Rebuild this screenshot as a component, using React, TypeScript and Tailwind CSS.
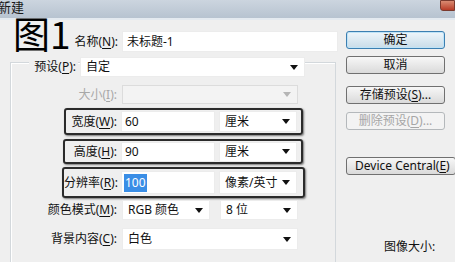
import React from 'react'

// Photoshop "新建" dialog with annotated fields
const FONT = "font-['Noto_Sans','Noto_Sans_CJK_SC',sans-serif]"

function Arrow({disabled}: {disabled?: boolean}) {
  return (
    <svg width="8" height="5" viewBox="0 0 8 5" className="shrink-0">
      <polygon points="0,0 8,0 4,5" fill={disabled ? '#b5b5b5' : '#111'} />
    </svg>
  )
}

function Label({name, k, w, disabled}: {name: string; k: string; w: number; disabled?: boolean}) {
  return (
    <div
      className={`shrink-0 text-right text-[12px] leading-none whitespace-nowrap ${disabled ? 'text-[#a8a8a8]' : 'text-[#111]'}`}
      style={{width: w}}
    >
      {name}(<span className="underline underline-offset-2">{k}</span>):
    </div>
  )
}

function Select({value, w, h, disabled}: {value?: string; w: number; h: number; disabled?: boolean}) {
  return (
    <div
      className={`flex items-center justify-between pl-[5px] pr-[6px] text-[12px] text-[#111] ${
        disabled ? 'bg-[#f3f3f3] border border-[#dcdcdc]' : 'bg-white border border-[#ececec]'
      }`}
      style={{width: w, height: h}}
    >
      <span className="whitespace-nowrap">{value}</span>
      <Arrow disabled={disabled} />
    </div>
  )
}

function Field({value, w, h, selected}: {value: string; w: number; h: number; selected?: boolean}) {
  return (
    <div className="flex items-center bg-white border border-[#ececec] pl-[2px] text-[12px] text-[#111]" style={{width: w, height: h}}>
      {selected ? <span className="bg-[#3a8ee6] text-white px-[1px]">{value}</span> : <span className="pl-[1px]">{value}</span>}
    </div>
  )
}

function Button({children, primary, disabled, w = 99}: {children: React.ReactNode; primary?: boolean; disabled?: boolean; w?: number}) {
  let cls = 'border-[#707070] bg-gradient-to-b from-[#f7f7f7] to-[#dadada] text-[#111]'
  if (primary) cls = 'border-[#3c7fb1] bg-gradient-to-b from-[#eef6fb] to-[#c9dce8] text-[#111] shadow-[inset_0_0_0_1px_#bfe3f7]'
  if (disabled) cls = 'border-[#b4b8bb] bg-[#f3f3f3] text-[#a6a6a6]'
  return (
    <div className={`flex items-center justify-center h-[18px] rounded-[3px] border text-[12px] whitespace-nowrap shrink-0 ${cls}`} style={{width: w}}>
      {children}
    </div>
  )
}

export default function App() {
  return (
    <div className={`relative w-[455px] h-[262px] overflow-hidden bg-[#efefef] ${FONT}`}>
      {/* title bar */}
      <div className="flex justify-between items-start h-[18px] bg-gradient-to-b from-[#ccd5df] to-[#b7c3d0]">
        <span className="-ml-[2px] -mt-[2px] text-[13px] text-[#1a1a1a]">新建</span>
        <div className="w-[15px] h-[11px] rounded-bl-[3px] bg-gradient-to-b from-[#d98a72] to-[#b83a26] border border-[#7a3a2e]" />
      </div>
      <div className="h-[2px] bg-[#e4eaf0]" />

      <div className="flex">
        {/* left column */}
        <div className="w-[345px] flex flex-col">
          <div className="flex items-center h-[21px] mt-[11px]">
            <Label name="名称" k="N" w={118} />
            <div className="ml-[4px] w-[216px] h-[21px] bg-white border border-[#ececec] flex items-center pl-[4px] text-[12px] text-[#111]">
              未标题-1
            </div>
          </div>

          <div className="ml-[10px] w-[326px] h-[220px] mt-[10px] border border-[#d3d8dc] shadow-[inset_1px_1px_0_#fff] flex flex-col">
            <div className="flex items-center h-[20px] -mt-[6px]">
              <div className="ml-[18px] px-[2px] bg-[#efefef] h-[20px] flex items-center">
                <Label name="预设" k="P" w={45} />
              </div>
              <div className="ml-[2px]">
                <Select value="自定" w={225} h={20} />
              </div>
            </div>

            <div className="flex items-center h-[19px] mt-[8px]">
              <Label name="大小" k="I" w={106} disabled />
              <div className="ml-[5px]">
                <Select w={176} h={19} disabled />
              </div>
            </div>

            <div className="ml-[53px] w-[239px] h-[27px] mt-[4px] border-2 border-[#2b2b2b] rounded-[3px] shadow-[1px_1px_2px_#777] flex items-center">
              <Label name="宽度" k="W" w={51} />
              <div className="ml-[4px]"><Field value="60" w={94} h={21} /></div>
              <div className="ml-[4px]"><Select value="厘米" w={78} h={21} /></div>
            </div>

            <div className="ml-[52px] w-[240px] h-[25px] mt-[4px] border-2 border-[#2b2b2b] rounded-[3px] shadow-[1px_1px_2px_#777] flex items-center">
              <Label name="高度" k="H" w={52} />
              <div className="ml-[4px]"><Field value="90" w={94} h={20} /></div>
              <div className="ml-[4px]"><Select value="厘米" w={78} h={20} /></div>
            </div>

            <div className="ml-[51px] w-[243px] h-[31px] mt-[3px] border-2 border-[#2b2b2b] rounded-[3px] shadow-[1px_1px_2px_#777] flex items-center">
              <Label name="分辨率" k="R" w={53} />
              <div className="ml-[4px]"><Field value="100" w={94} h={23} selected /></div>
              <div className="ml-[4px]"><Select value="像素/英寸" w={78} h={23} /></div>
            </div>

            <div className="flex items-center h-[20px] mt-[2px]">
              <Label name="颜色模式" k="M" w={106} />
              <div className="ml-[5px]"><Select value="RGB 颜色" w={88} h={20} /></div>
              <div className="ml-[10px]"><Select value="8 位" w={78} h={20} /></div>
            </div>

            <div className="flex items-center h-[22px] mt-[8px]">
              <Label name="背景内容" k="C" w={106} />
              <div className="ml-[5px]"><Select value="白色" w={176} h={22} /></div>
            </div>
          </div>
        </div>

        {/* right column */}
        <div className="flex flex-col pl-[8px]">
          <div className="mt-[11px]"><Button primary>确定</Button></div>
          <div className="mt-[7px]"><Button>取消</Button></div>
          <div className="mt-[12px]"><Button>存储预设(<span className="underline underline-offset-2">S</span>)...</Button></div>
          <div className="mt-[8px]"><Button disabled>删除预设(<span className="underline underline-offset-2">D</span>)...</Button></div>
          <div className="mt-[27px]">
            <Button w={110}>
              <span className="w-full pl-[8px] text-left">Device Central(<span className="underline underline-offset-2">E</span>)</span>
            </Button>
          </div>
          <div className="mt-[63px] pl-[38px] text-[12px] text-[#111]">图像大小:</div>
        </div>
      </div>

      {/* annotation over the dialog */}
      <div className="absolute left-[13px] top-[15px] text-[37px] leading-none font-normal text-black font-['Noto_Sans_CJK_SC',sans-serif]">
        图1
      </div>
    </div>
  )
}
